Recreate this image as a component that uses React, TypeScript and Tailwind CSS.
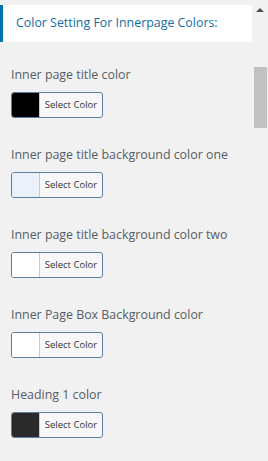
const fields = [
	{ label: 'Inner page title color', color: '#000000' },
	{ label: 'Inner page title background color one', color: '#eaf1fb' },
	{ label: 'Inner page title background color two', color: '#ffffff' },
	{ label: 'Inner Page Box Background color', color: '#ffffff' },
	{ label: 'Heading 1 color', color: '#2a2a2a' },
];

const ColorField = ({ label, color }: { label: string; color: string }) => (
	<div className="flex flex-col gap-[7px]">
		<span className="text-[12.4px] leading-5 text-[#555d66]">{label}</span>
		<button className="flex h-[26px] w-[92px] items-stretch overflow-hidden rounded-[3px] border border-[#5b7fa3] bg-[#f7f7f7] p-0">
			<span className="w-[28px] border-r border-[#c8cbce]" style={{ backgroundColor: color }} />
			<span className="flex flex-1 items-center justify-center text-[9.5px] text-[#32373c]">Select Color</span>
		</button>
	</div>
);

const App = () => {
	return (
		<div className="flex h-[461px] w-[268px] overflow-hidden bg-[#f1f1f1] font-['Open_Sans',sans-serif]">
			<div className="flex w-[252px] flex-col pt-[5px]">
				<div className="flex h-[37px] items-center border-l-[3px] border-[#0073aa] bg-white pl-[13px]">
					<h3 className="text-[12.4px] text-[#136ea3]">Color Setting For Innerpage Colors:</h3>
				</div>
				<div className="flex flex-col gap-[27px] px-[11px] pt-[23px]">
					{fields.map((f) => (
						<ColorField key={f.label} label={f.label} color={f.color} />
					))}
				</div>
			</div>
			<div className="relative flex w-4 flex-col items-center">
				<div className="mt-[8px] h-0 w-0 border-x-[4px] border-b-[4px] border-x-transparent border-b-[#505050]" />
				<div className="absolute left-[2px] top-[67px] h-[61px] w-[13px] bg-[#c1c1c1]" />
			</div>
		</div>
	);
};

export default App;
